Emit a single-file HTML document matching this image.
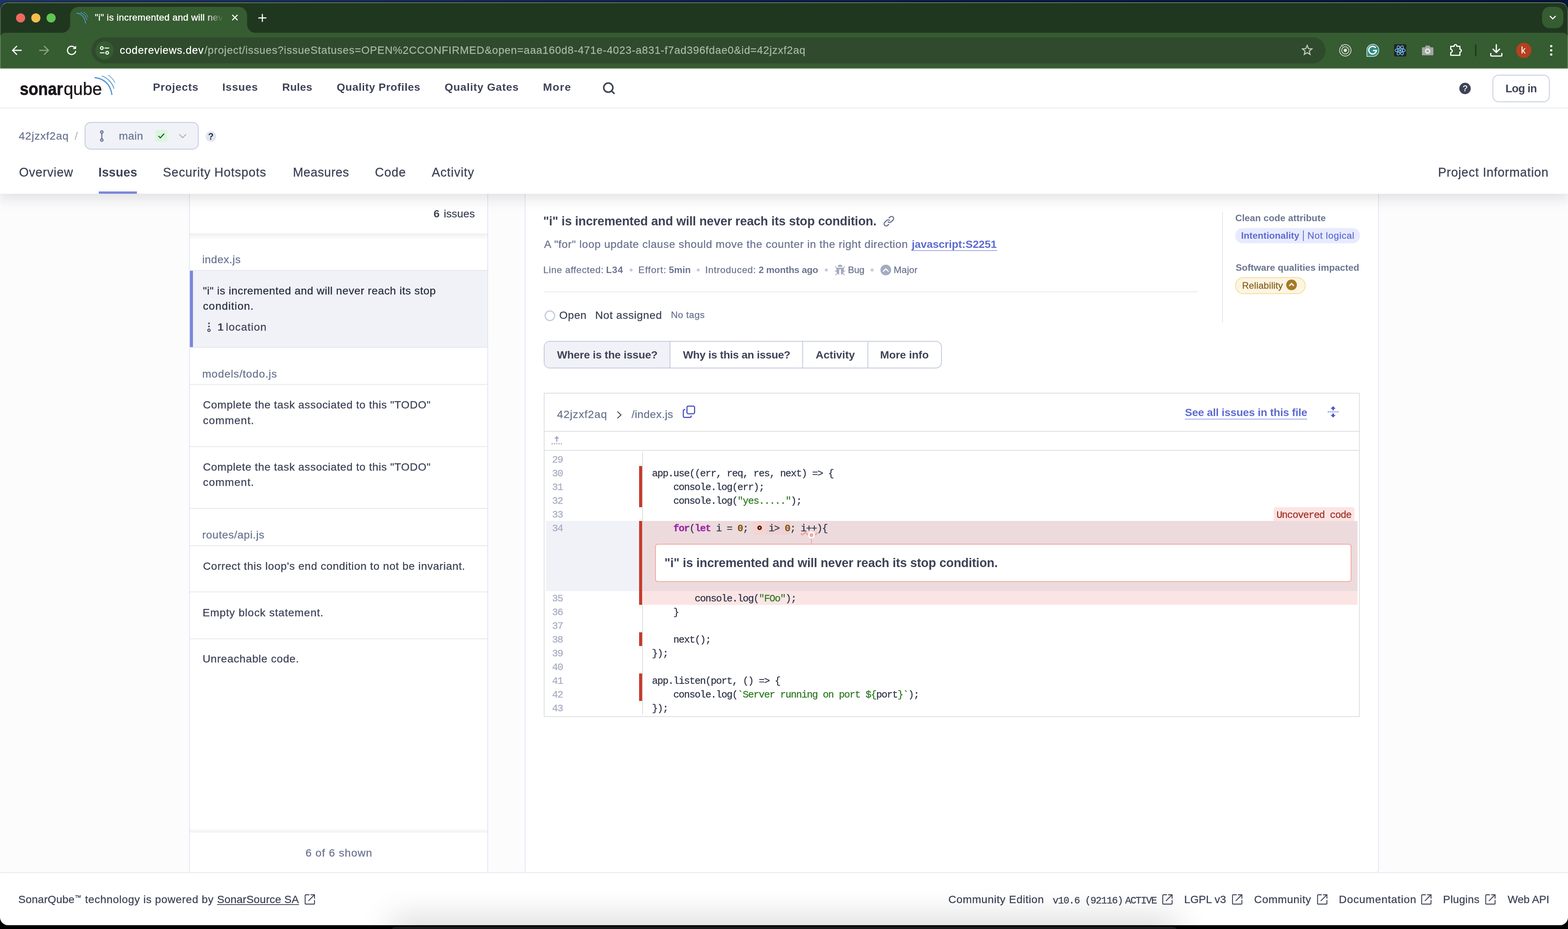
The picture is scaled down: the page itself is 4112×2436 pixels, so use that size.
<!DOCTYPE html>
<html lang="en"><head><meta charset="utf-8"><title>"i" is incremented and will never reach its stop condition.</title>
<style>
html,body{margin:0;padding:0;background:#000;}
html{width:4112px;height:2436px;overflow:hidden;}
body{width:4112px;height:2436px;overflow:hidden;position:relative;font-family:"Liberation Sans",sans-serif;}
#desk{position:absolute;left:0;top:0;width:4112px;height:40px;background:linear-gradient(90deg,#1d3564,#0a2048 50%,#02153a);}
#frame{position:absolute;left:0;top:6px;width:4112px;height:2420px;border-radius:21px;box-sizing:border-box;border:2px solid rgba(255,255,255,0.0);border-top-color:rgba(255,255,255,0.38);border-left-color:rgba(255,255,255,0.22);border-right-color:rgba(255,255,255,0.22);pointer-events:none;}
#outl{position:absolute;left:0;top:5px;width:4112px;height:2422px;border-radius:22px;background:#000;}
#win{will-change:transform;position:absolute;left:0;top:0;width:4112px;height:2436px;overflow:hidden;clip-path:inset(6px 0px 10px 0px round 21px);}
.ab{position:absolute;display:block;}
.t{position:absolute;white-space:pre;line-height:1;font-family:"Liberation Sans",sans-serif;color:#3e4357;}
.m{font-family:"Liberation Mono",monospace;}
#dock{position:absolute;left:1026px;top:2429px;width:2061px;height:30px;border-radius:14px;background:#19191b;box-shadow:0 0 90px 4px rgba(0,0,0,0.3);}
</style></head><body>
<div id="desk"></div><div id="outl"></div>
<div id="win">
<!-- page -->
<div class="ab" style="left:0;top:179px;width:4112px;height:2257px;background:#fcfcfd"></div>
<div class="ab" style="left:496px;top:508px;width:784px;height:1780px;background:#fff;border-left:2px solid #e1e6f3;border-right:2px solid #e1e6f3;box-sizing:border-box"></div>
<div class="ab" style="left:498px;top:708px;width:780px;height:204px;background:#f0f2f8;border-top:2px solid #e5e7ee;border-bottom:2px solid #e5e7ee;box-sizing:border-box"></div>
<div class="ab" style="left:498px;top:710px;width:8px;height:200px;background:#7b87d9"></div>
<div class="ab" style="left:498px;top:1007px;width:780px;height:2px;background:#e4e7ef"></div>
<div class="ab" style="left:498px;top:1170px;width:780px;height:2px;background:#e4e7ef"></div>
<div class="ab" style="left:498px;top:1332px;width:780px;height:2px;background:#e4e7ef"></div>
<div class="ab" style="left:498px;top:1430px;width:780px;height:2px;background:#e4e7ef"></div>
<div class="ab" style="left:498px;top:1551px;width:780px;height:2px;background:#e4e7ef"></div>
<div class="ab" style="left:498px;top:1674px;width:780px;height:2px;background:#e4e7ef"></div>
<div class="ab" style="left:498px;top:508px;width:780px;height:1780px;overflow:hidden;pointer-events:none"><div class="ab" style="left:-20px;top:0;width:820px;height:104px;background:#fff;box-shadow:0 6px 14px rgba(29,33,47,0.09)"></div><div class="ab" style="left:-20px;top:1675px;width:820px;height:125px;background:#fff;box-shadow:0 -5px 10px rgba(29,33,47,0.07)"></div></div>
<svg class="ab" style="left:541px;top:844px" width="14" height="28" viewBox="0 0 14 28"><circle cx="7" cy="4" r="2.3" fill="#3e4357"/><circle cx="7" cy="12" r="2.3" fill="#3e4357"/><circle cx="7" cy="22" r="3.2" fill="none" stroke="#3e4357" stroke-width="2.4"/></svg>
<span class="t" style="left:1137.0px;top:545.9px;font-size:28.5px;font-weight:700;">6</span>
<span class="t" style="left:1163.7px;top:545.9px;font-size:28.5px;letter-spacing:0.15px;-webkit-text-stroke:0.4px #3e4357;">issues</span>
<span class="t" style="left:530.2px;top:665.9px;font-size:28.5px;color:#6a7590;letter-spacing:0.60px;-webkit-text-stroke:0.4px #6a7590;">index.js</span>
<span class="t" style="left:532.2px;top:747.9px;font-size:28.5px;color:#2a2f40;letter-spacing:0.66px;-webkit-text-stroke:0.4px #2a2f40;">"i" is incremented and will never reach its stop</span>
<span class="t" style="left:532.2px;top:787.9px;font-size:28.5px;color:#2a2f40;letter-spacing:1.17px;-webkit-text-stroke:0.4px #2a2f40;">condition.</span>
<span class="t" style="left:570.5px;top:843.4px;font-size:28.5px;font-weight:700;">1</span>
<span class="t" style="left:592.2px;top:843.4px;font-size:28.5px;letter-spacing:1.17px;-webkit-text-stroke:0.4px #3e4357;">location</span>
<span class="t" style="left:530.2px;top:965.9px;font-size:28.5px;color:#6a7590;letter-spacing:0.93px;-webkit-text-stroke:0.4px #6a7590;">models/todo.js</span>
<span class="t" style="left:532.2px;top:1047.4px;font-size:28.5px;letter-spacing:0.69px;-webkit-text-stroke:0.4px #3e4357;">Complete the task associated to this "TODO"</span>
<span class="t" style="left:532.2px;top:1087.9px;font-size:28.5px;letter-spacing:1.20px;-webkit-text-stroke:0.4px #3e4357;">comment.</span>
<span class="t" style="left:532.2px;top:1209.9px;font-size:28.5px;letter-spacing:0.69px;-webkit-text-stroke:0.4px #3e4357;">Complete the task associated to this "TODO"</span>
<span class="t" style="left:532.2px;top:1249.9px;font-size:28.5px;letter-spacing:1.20px;-webkit-text-stroke:0.4px #3e4357;">comment.</span>
<span class="t" style="left:530.2px;top:1388.4px;font-size:28.5px;color:#6a7590;letter-spacing:0.77px;-webkit-text-stroke:0.4px #6a7590;">routes/api.js</span>
<span class="t" style="left:532.2px;top:1469.9px;font-size:28.5px;letter-spacing:0.76px;-webkit-text-stroke:0.4px #3e4357;">Correct this loop's end condition to not be invariant.</span>
<span class="t" style="left:531.2px;top:1591.9px;font-size:28.5px;letter-spacing:0.97px;-webkit-text-stroke:0.4px #3e4357;">Empty block statement.</span>
<span class="t" style="left:531.2px;top:1713.4px;font-size:28.5px;letter-spacing:0.83px;-webkit-text-stroke:0.4px #3e4357;">Unreachable code.</span>
<span class="t" style="left:801.2px;top:2221.9px;font-size:28.5px;color:#6a7590;letter-spacing:1.17px;-webkit-text-stroke:0.4px #6a7590;">6 of 6 shown</span>
<!-- main -->
<div class="ab" style="left:1376px;top:508px;width:2240px;height:1781px;background:#fff;border:2px solid #e1e6f3;border-top:none;border-radius:0 0 8px 8px;box-sizing:border-box"></div>
<svg class="ab" style="left:2315px;top:564px" width="32" height="32" viewBox="0 0 16 16" fill="#6a7590"><path d="m7.775 3.275 1.25-1.25a3.5 3.5 0 1 1 4.95 4.95l-2.5 2.5a3.5 3.5 0 0 1-4.95 0 .751.751 0 0 1 .018-1.042.751.751 0 0 1 1.042-.018 1.998 1.998 0 0 0 2.83 0l2.5-2.5a2.002 2.002 0 0 0-2.830-2.830l-1.25 1.25a.751.751 0 0 1-1.042-.018.751.751 0 0 1-.018-1.042Zm-4.690 9.640a1.998 1.998 0 0 0 2.830 0l1.25-1.25a.751.751 0 0 1 1.042.018.751.751 0 0 1 .018 1.042l-1.25 1.25a3.5 3.5 0 1 1-4.95-4.95l2.5-2.5a3.5 3.5 0 0 1 4.95 0 .751.751 0 0 1-.018 1.042.751.751 0 0 1-1.042.018 1.998 1.998 0 0 0-2.830 0l-2.5 2.5a1.998 1.998 0 0 0 0 2.830Z"/></svg>
<div class="ab" style="left:2390px;top:656px;width:225px;height:2px;background:#9aa4e8"></div>
<div class="ab" style="left:1650.6px;top:704px;width:8px;height:8px;border-radius:50%;background:#c5cddf"></div>
<div class="ab" style="left:1826.6px;top:704px;width:8px;height:8px;border-radius:50%;background:#c5cddf"></div>
<div class="ab" style="left:2162.5px;top:704px;width:8px;height:8px;border-radius:50%;background:#c5cddf"></div>
<div class="ab" style="left:2283.2px;top:704px;width:8px;height:8px;border-radius:50%;background:#c5cddf"></div>
<svg class="ab" style="left:2189px;top:694px" width="28" height="28" viewBox="0 0 28 28"><g fill="#a5abc0"><path d="M8 5.8 A6.05 6.05 0 0 1 20.1 5.8 Z"/><path d="M4.2 8 H23.9 V17 Q23 22.5 19.5 25 L16.3 26 V14 A2.2 2.2 0 0 0 11.8 14 V26 L8.5 25 Q5 22.500 4.2 17 Z"/></g><g stroke="#a5abc0" stroke-width="1.9" stroke-linecap="round" fill="none"><path d="M1.6 5.300 L5 8.200"/><path d="M26.5 5.300 L23 8.200"/><path d="M0.8 16.9 H4.5"/><path d="M27.2 16.9 H23.500"/><path d="M2.600 27 L6.900 23"/><path d="M25.500 27 L21.1 23"/></g></svg>
<svg class="ab" style="left:2309px;top:694px" width="28" height="28" viewBox="0 0 28 28"><circle cx="14" cy="14" r="14" fill="#a5abc0"/><path d="M7.600 17.3 L14 11 L20.4 17.3" fill="none" stroke="#fff" stroke-width="3" stroke-linecap="round" stroke-linejoin="round"/></svg>
<div class="ab" style="left:1426px;top:764px;width:1715px;height:2px;background:#e9e9eb"></div>
<div class="ab" style="left:1428px;top:814px;width:28px;height:28px;border-radius:50%;border:3.2px solid #c3cadf;box-sizing:border-box;background:#fff"></div>
<div class="ab" style="left:1426px;top:894px;width:1044px;height:72px;border-radius:16px;border:2px solid #bfc6dc;background:#fff;box-sizing:border-box;overflow:hidden"><div style="position:absolute;left:0;top:0;width:329px;height:68px;background:#f0f2f8"></div></div>
<div class="ab" style="left:1756px;top:895px;width:2px;height:70px;background:#bfc6dc"></div>
<div class="ab" style="left:2104px;top:895px;width:2px;height:70px;background:#bfc6dc"></div>
<div class="ab" style="left:2275px;top:895px;width:2px;height:70px;background:#bfc6dc"></div>
<div class="ab" style="left:3205px;top:556px;width:2px;height:290px;background:#e1e6f3"></div>
<div class="ab" style="left:3238.6px;top:598px;width:328.3px;height:40px;border-radius:20px;background:#e8ebff"></div>
<div class="ab" style="left:3417.4px;top:604px;width:2px;height:28px;background:#5d6cd0"></div>
<div class="ab" style="left:3238.6px;top:727px;width:185.3px;height:44px;border-radius:22px;background:#fcf5e4;border:2px solid #f6dc8c;box-sizing:border-box"></div>
<svg class="ab" style="left:3372.6px;top:732.5px" width="28" height="28" viewBox="0 0 28 28"><circle cx="14" cy="14" r="14" fill="#a87a26"/><path d="M8 16.500 L14 10.5 L20 16.500" fill="none" stroke="#fff" stroke-width="3.2"/></svg>
<span class="t" style="left:1424.6px;top:563.5px;font-size:32.5px;font-weight:700;letter-spacing:-0.22px;">"i" is incremented and will never reach its stop condition.</span>
<span class="t" style="left:1426.7px;top:625.9px;font-size:28.5px;color:#6a7590;letter-spacing:0.71px;-webkit-text-stroke:0.4px #6a7590;">A "for" loop update clause should move the counter in the right direction</span>
<span class="t" style="left:2391.0px;top:625.9px;font-size:28.5px;font-weight:700;color:#5d6cd0;letter-spacing:-0.14px;">javascript:S2251</span>
<span class="t" style="left:1424.8px;top:695.8px;font-size:24.5px;color:#6a7590;letter-spacing:0.85px;-webkit-text-stroke:0.4px #6a7590;">Line affected:</span>
<span class="t" style="left:1589.3px;top:695.8px;font-size:24.5px;font-weight:700;color:#6a7590;letter-spacing:1.00px;">L34</span>
<span class="t" style="left:1674.0px;top:695.8px;font-size:24.5px;color:#6a7590;letter-spacing:1.30px;-webkit-text-stroke:0.4px #6a7590;">Effort:</span>
<span class="t" style="left:1754.1px;top:695.8px;font-size:24.5px;font-weight:700;color:#6a7590;letter-spacing:0.08px;">5min</span>
<span class="t" style="left:1849.5px;top:695.8px;font-size:24.5px;color:#6a7590;letter-spacing:0.99px;-webkit-text-stroke:0.4px #6a7590;">Introduced:</span>
<span class="t" style="left:1989.4px;top:695.8px;font-size:24.5px;font-weight:700;color:#6a7590;letter-spacing:-0.26px;">2 months ago</span>
<span class="t" style="left:2223.7px;top:695.8px;font-size:24.5px;color:#6a7590;letter-spacing:-0.14px;-webkit-text-stroke:0.4px #6a7590;">Bug</span>
<span class="t" style="left:2343.8px;top:695.8px;font-size:24.5px;color:#6a7590;letter-spacing:0.28px;-webkit-text-stroke:0.4px #6a7590;">Major</span>
<span class="t" style="left:1466.5px;top:811.6px;font-size:28.5px;letter-spacing:0.58px;-webkit-text-stroke:0.4px #3e4357;">Open</span>
<span class="t" style="left:1560.7px;top:811.6px;font-size:28.5px;letter-spacing:0.78px;-webkit-text-stroke:0.4px #3e4357;">Not assigned</span>
<span class="t" style="left:1759.5px;top:813.6px;font-size:24.5px;color:#6a7590;letter-spacing:0.65px;-webkit-text-stroke:0.4px #6a7590;">No tags</span>
<span class="t" style="left:1460.7px;top:915.9px;font-size:28.5px;font-weight:700;letter-spacing:-0.20px;">Where is the issue?</span>
<span class="t" style="left:1791.0px;top:915.9px;font-size:28.5px;font-weight:700;letter-spacing:-0.39px;">Why is this an issue?</span>
<span class="t" style="left:2139.1px;top:915.9px;font-size:28.5px;font-weight:700;letter-spacing:-0.04px;">Activity</span>
<span class="t" style="left:2308.0px;top:915.9px;font-size:28.5px;font-weight:700;letter-spacing:-0.07px;">More info</span>
<span class="t" style="left:3239.4px;top:560.3px;font-size:24.5px;font-weight:700;color:#6a7590;letter-spacing:0.10px;">Clean code attribute</span>
<span class="t" style="left:3254.7px;top:606.3px;font-size:24.5px;font-weight:700;color:#5d6cd0;letter-spacing:0.02px;">Intentionality</span>
<span class="t" style="left:3428.8px;top:606.3px;font-size:24.5px;color:#5d6cd0;letter-spacing:0.83px;-webkit-text-stroke:0.4px #5d6cd0;">Not logical</span>
<span class="t" style="left:3240.4px;top:690.3px;font-size:24.5px;font-weight:700;color:#6a7590;">Software qualities impacted</span>
<span class="t" style="left:3257.2px;top:737.3px;font-size:24.5px;color:#86601f;letter-spacing:0.22px;-webkit-text-stroke:0.4px #86601f;">Reliability</span>
<!-- code -->
<div class="ab" style="left:1426px;top:1030px;width:2140px;height:850px;border:2px solid #dddddd;box-sizing:border-box;background:#fff"></div>
<div class="ab" style="left:1428px;top:1130px;width:2137px;height:2px;background:#dddddd"></div>
<div class="ab" style="left:1428px;top:1180px;width:2137px;height:2px;background:#dddddd"></div>
<svg class="ab" style="left:1615px;top:1075px" width="18" height="26" viewBox="0 0 18 26" fill="none" stroke="#3e4357" stroke-width="2.4"><path d="M4 4 L13.5 13 L4 22"/></svg>
<svg class="ab" style="left:1789px;top:1062px" width="36" height="36" viewBox="0 0 36 36" fill="none" stroke="#4b56bb" stroke-width="3"><rect x="12.5" y="3" width="20" height="20" rx="3.500"/><path d="M8 12 H6 A3 3 0 0 0 3 15 V29.5 A3 3 0 0 0 6 32.5 H20.5 A3 3 0 0 0 23.5 29.5 V27.5"/></svg>
<div class="ab" style="left:3107px;top:1098px;width:321px;height:2px;background:#9aa4e8"></div>
<svg class="ab" style="left:3481px;top:1064px" width="30" height="32" viewBox="0 0 30 32" fill="#4b56bb"><path d="M15 1 L21.5 8 H17 V12 H13 V8 H8.500 Z"/><path d="M15 31 L21.5 24 H17 V20 H13 V24 H8.500 Z"/><g><rect x="1" y="15" width="3" height="2"/><rect x="6" y="15" width="3" height="2"/><rect x="11" y="15" width="3" height="2"/><rect x="16" y="15" width="3" height="2"/><rect x="21" y="15" width="3" height="2"/><rect x="26" y="15" width="3" height="2"/></g></svg>
<svg class="ab" style="left:1446px;top:1142px" width="30" height="24" viewBox="0 0 30 24" fill="#a3a9c1"><path d="M14 1.2 L20.4 8 H15.6 V16 H12.4 V8 H7.6 Z"/><circle cx="2" cy="21.6" r="1.8"/><circle cx="8" cy="21.6" r="1.8"/><circle cx="14" cy="21.6" r="1.8"/><circle cx="20" cy="21.6" r="1.8"/><circle cx="26" cy="21.6" r="1.8"/></svg>
<div class="ab" style="left:1684px;top:1186px;width:2px;height:688px;background:#dddddd"></div>
<div class="ab" style="left:1432px;top:1366px;width:244px;height:184px;background:#f0f2f8"></div>
<div class="ab" style="left:1684px;top:1366px;width:1876px;height:184px;background:#eddadc"></div>
<div class="ab" style="left:1684px;top:1550px;width:1876px;height:36px;background:#fbe5e4"></div>
<div class="ab" style="left:2007px;top:1366px;width:65px;height:36px;background:#edd3d6"></div>
<div class="ab" style="left:1976px;top:1366px;width:32px;height:36px;border-radius:5px;background:#f6d3cf"></div>
<div class="ab" style="left:1986px;top:1378px;width:12px;height:12px;border-radius:50%;box-sizing:border-box;border:4.2px solid #521a12;background:#f3cfc9"></div>
<div class="ab" style="left:1676px;top:1222px;width:8px;height:108px;background:#c53b2c"></div>
<div class="ab" style="left:1676px;top:1658px;width:8px;height:36px;background:#c53b2c"></div>
<div class="ab" style="left:1676px;top:1766px;width:8px;height:72px;background:#c53b2c"></div>
<div class="ab" style="left:1676px;top:1366px;width:8px;height:220px;background:#c53b2c"></div>
<div class="ab" style="left:3340px;top:1330px;width:212px;height:36px;border-radius:6px 6px 0 0;background:#fce4e2"></div>
<span class="t m" style="left:3347.5px;top:1337.9px;font-size:26px;letter-spacing:-1.603px;color:#a0302a;-webkit-text-stroke:0.4px currentColor;">Uncovered code</span>
<div class="ab" style="left:1718px;top:1426px;width:1826px;height:100px;border:2px solid #f3a39b;border-radius:7px;box-sizing:border-box;background:#fff"></div>
<svg class="ab" style="left:2098px;top:1392px" width="48" height="36" viewBox="0 0 48 36" fill="none"><path d="M2.5 6.5 Q5.5 12 8.5 9 Q12 5.5 15 3.5 Q17.5 9 22 10.5 M39.5 10.5 Q43 9 44 4.5" stroke="#f3a9a2" stroke-width="4.4"/><path d="M30 16 V35" stroke="#f3a39b" stroke-width="2"/><circle cx="30" cy="11" r="7" fill="#f3a9a2" stroke="#fff" stroke-width="3.6"/></svg>
<span class="t m" style="left:1447.8px;top:1192.9px;font-size:26px;letter-spacing:-1.603px;color:#a6adc2;-webkit-text-stroke:0.4px currentColor;">29</span>
<span class="t m" style="left:1447.8px;top:1228.9px;font-size:26px;letter-spacing:-1.603px;color:#a6adc2;-webkit-text-stroke:0.4px currentColor;">30</span>
<span class="t m" style="left:1709.7px;top:1228.9px;font-size:26px;letter-spacing:-1.603px;color:#30354a;-webkit-text-stroke:0.4px currentColor;">app.use((err, req, res, next) =&gt; {</span>
<span class="t m" style="left:1447.8px;top:1264.9px;font-size:26px;letter-spacing:-1.603px;color:#a6adc2;-webkit-text-stroke:0.4px currentColor;">31</span>
<span class="t m" style="left:1709.7px;top:1264.9px;font-size:26px;letter-spacing:-1.603px;color:#30354a;-webkit-text-stroke:0.4px currentColor;">    console.log(err);</span>
<span class="t m" style="left:1447.8px;top:1300.9px;font-size:26px;letter-spacing:-1.603px;color:#a6adc2;-webkit-text-stroke:0.4px currentColor;">32</span>
<span class="t m" style="left:1709.7px;top:1300.9px;font-size:26px;letter-spacing:-1.603px;color:#30354a;-webkit-text-stroke:0.4px currentColor;">    console.log(<span style="color:#2f7a22">"yes....."</span>);</span>
<span class="t m" style="left:1447.8px;top:1336.9px;font-size:26px;letter-spacing:-1.603px;color:#a6adc2;-webkit-text-stroke:0.4px currentColor;">33</span>
<span class="t m" style="left:1447.8px;top:1372.9px;font-size:26px;letter-spacing:-1.603px;color:#a6adc2;-webkit-text-stroke:0.4px currentColor;">34</span>
<span class="t m" style="left:1447.8px;top:1556.9px;font-size:26px;letter-spacing:-1.603px;color:#a6adc2;-webkit-text-stroke:0.4px currentColor;">35</span>
<span class="t m" style="left:1709.7px;top:1556.9px;font-size:26px;letter-spacing:-1.603px;color:#30354a;-webkit-text-stroke:0.4px currentColor;">        console.log(<span style="color:#2f7a22">"FOo"</span>);</span>
<span class="t m" style="left:1447.8px;top:1592.9px;font-size:26px;letter-spacing:-1.603px;color:#a6adc2;-webkit-text-stroke:0.4px currentColor;">36</span>
<span class="t m" style="left:1709.7px;top:1592.9px;font-size:26px;letter-spacing:-1.603px;color:#30354a;-webkit-text-stroke:0.4px currentColor;">    }</span>
<span class="t m" style="left:1447.8px;top:1628.9px;font-size:26px;letter-spacing:-1.603px;color:#a6adc2;-webkit-text-stroke:0.4px currentColor;">37</span>
<span class="t m" style="left:1447.8px;top:1664.9px;font-size:26px;letter-spacing:-1.603px;color:#a6adc2;-webkit-text-stroke:0.4px currentColor;">38</span>
<span class="t m" style="left:1709.7px;top:1664.9px;font-size:26px;letter-spacing:-1.603px;color:#30354a;-webkit-text-stroke:0.4px currentColor;">    next();</span>
<span class="t m" style="left:1447.8px;top:1700.9px;font-size:26px;letter-spacing:-1.603px;color:#a6adc2;-webkit-text-stroke:0.4px currentColor;">39</span>
<span class="t m" style="left:1709.7px;top:1700.9px;font-size:26px;letter-spacing:-1.603px;color:#30354a;-webkit-text-stroke:0.4px currentColor;">});</span>
<span class="t m" style="left:1447.8px;top:1736.9px;font-size:26px;letter-spacing:-1.603px;color:#a6adc2;-webkit-text-stroke:0.4px currentColor;">40</span>
<span class="t m" style="left:1447.8px;top:1772.9px;font-size:26px;letter-spacing:-1.603px;color:#a6adc2;-webkit-text-stroke:0.4px currentColor;">41</span>
<span class="t m" style="left:1709.7px;top:1772.9px;font-size:26px;letter-spacing:-1.603px;color:#30354a;-webkit-text-stroke:0.4px currentColor;">app.listen(port, () =&gt; {</span>
<span class="t m" style="left:1447.8px;top:1808.9px;font-size:26px;letter-spacing:-1.603px;color:#a6adc2;-webkit-text-stroke:0.4px currentColor;">42</span>
<span class="t m" style="left:1709.7px;top:1808.9px;font-size:26px;letter-spacing:-1.603px;color:#30354a;-webkit-text-stroke:0.4px currentColor;">    console.log(<span style="color:#2f7a22">`Server running on port ${</span>port<span style="color:#2f7a22">}`</span>);</span>
<span class="t m" style="left:1447.8px;top:1844.9px;font-size:26px;letter-spacing:-1.603px;color:#a6adc2;-webkit-text-stroke:0.4px currentColor;">43</span>
<span class="t m" style="left:1709.7px;top:1844.9px;font-size:26px;letter-spacing:-1.603px;color:#30354a;-webkit-text-stroke:0.4px currentColor;">});</span>
<span class="t m" style="left:1709.7px;top:1372.9px;font-size:26px;letter-spacing:-1.603px;color:#30354a;-webkit-text-stroke:0.4px currentColor;">    <b style="color:#9b27a7">for</b>(<b style="color:#9b27a7">let</b> i = <b style="color:#80580f">0</b>;</span>
<span class="t m" style="left:2015.7px;top:1372.9px;font-size:26px;letter-spacing:-1.603px;color:#30354a;-webkit-text-stroke:0.4px currentColor;">i&gt; <b style="color:#80580f">0</b>; i++){</span>
<span class="t" style="left:1460.7px;top:1071.9px;font-size:28.5px;color:#6a7590;letter-spacing:1.12px;-webkit-text-stroke:0.4px #6a7590;">42jzxf2aq</span>
<span class="t" style="left:1656.2px;top:1071.9px;font-size:28.5px;color:#6a7590;letter-spacing:0.54px;-webkit-text-stroke:0.4px #6a7590;">/index.js</span>
<span class="t" style="left:3107.5px;top:1066.9px;font-size:28.5px;font-weight:700;color:#5d6cd0;letter-spacing:-0.27px;">See all issues in this file</span>
<span class="t" style="left:1742.6px;top:1460.0px;font-size:32.5px;font-weight:700;letter-spacing:-0.22px;">"i" is incremented and will never reach its stop condition.</span>
<!-- footer -->
<div class="ab" style="left:0;top:2288px;width:4112px;height:148px;background:#fff"></div>
<div class="ab" style="left:0;top:2287px;width:4112px;height:2px;background:#e6e8ee"></div>
<svg class="ab" style="left:798.5px;top:2344.5px" width="27" height="27" viewBox="0 0 27 27" fill="none" stroke="#3e4357" stroke-width="2.4"><path d="M12.5 1.2 H3.200 A2 2 0 0 0 1.2 3.200 V23.8 A2 2 0 0 0 3.200 25.8 H23.8 A2 2 0 0 0 25.8 23.8 V14.8"/><path d="M15.500 1.2 H25.8 V11.5"/><path d="M25.8 1.2 L9.500 17.5"/></svg>
<svg class="ab" style="left:3048.3px;top:2344.5px" width="27" height="27" viewBox="0 0 27 27" fill="none" stroke="#3e4357" stroke-width="2.4"><path d="M12.5 1.2 H3.200 A2 2 0 0 0 1.2 3.200 V23.8 A2 2 0 0 0 3.200 25.8 H23.8 A2 2 0 0 0 25.8 23.8 V14.8"/><path d="M15.500 1.2 H25.8 V11.5"/><path d="M25.8 1.2 L9.500 17.5"/></svg>
<svg class="ab" style="left:3230.5px;top:2344.5px" width="27" height="27" viewBox="0 0 27 27" fill="none" stroke="#3e4357" stroke-width="2.4"><path d="M12.5 1.2 H3.200 A2 2 0 0 0 1.2 3.200 V23.8 A2 2 0 0 0 3.200 25.8 H23.8 A2 2 0 0 0 25.8 23.8 V14.8"/><path d="M15.500 1.2 H25.8 V11.5"/><path d="M25.8 1.2 L9.500 17.5"/></svg>
<svg class="ab" style="left:3453.7px;top:2344.5px" width="27" height="27" viewBox="0 0 27 27" fill="none" stroke="#3e4357" stroke-width="2.4"><path d="M12.5 1.2 H3.200 A2 2 0 0 0 1.2 3.200 V23.8 A2 2 0 0 0 3.200 25.8 H23.8 A2 2 0 0 0 25.8 23.8 V14.8"/><path d="M15.500 1.2 H25.8 V11.5"/><path d="M25.8 1.2 L9.500 17.5"/></svg>
<svg class="ab" style="left:3727.0px;top:2344.5px" width="27" height="27" viewBox="0 0 27 27" fill="none" stroke="#3e4357" stroke-width="2.4"><path d="M12.5 1.2 H3.200 A2 2 0 0 0 1.2 3.200 V23.8 A2 2 0 0 0 3.200 25.8 H23.8 A2 2 0 0 0 25.8 23.8 V14.8"/><path d="M15.500 1.2 H25.8 V11.5"/><path d="M25.8 1.2 L9.500 17.5"/></svg>
<svg class="ab" style="left:3894.5px;top:2344.5px" width="27" height="27" viewBox="0 0 27 27" fill="none" stroke="#3e4357" stroke-width="2.4"><path d="M12.5 1.2 H3.200 A2 2 0 0 0 1.2 3.200 V23.8 A2 2 0 0 0 3.200 25.8 H23.8 A2 2 0 0 0 25.8 23.8 V14.8"/><path d="M15.500 1.2 H25.8 V11.5"/><path d="M25.8 1.2 L9.500 17.5"/></svg>
<span class="t" style="left:48.1px;top:2343.7px;font-size:28.5px;letter-spacing:0.19px;-webkit-text-stroke:0.4px #3e4357;">SonarQube</span>
<span class="t" style="left:196.0px;top:2344.6px;font-size:17px;-webkit-text-stroke:0.4px #3e4357;">™</span>
<span class="t" style="left:223.0px;top:2343.7px;font-size:28.5px;letter-spacing:0.66px;-webkit-text-stroke:0.4px #3e4357;">technology is powered by</span>
<span class="t" style="left:569.2px;top:2343.7px;font-size:28.5px;letter-spacing:0.18px;-webkit-text-stroke:0.4px #3e4357;text-decoration:underline;text-decoration-thickness:2px;text-underline-offset:3px;">SonarSource SA</span>
<span class="t" style="left:2486.9px;top:2343.7px;font-size:28.5px;letter-spacing:0.70px;-webkit-text-stroke:0.4px #3e4357;">Community Edition</span>
<span class="t m" style="left:2760.4px;top:2348.9px;font-size:26px;letter-spacing:-1.45px;-webkit-text-stroke:0.4px #3e4357;">v10.6 (92116)</span>
<span class="t m" style="left:2950.8px;top:2348.9px;font-size:26px;letter-spacing:-1.94px;-webkit-text-stroke:0.4px #3e4357;">ACTIVE</span>
<span class="t" style="left:3105.6px;top:2343.7px;font-size:28.5px;letter-spacing:-0.02px;-webkit-text-stroke:0.4px #3e4357;">LGPL v3</span>
<span class="t" style="left:3288.8px;top:2343.7px;font-size:28.5px;letter-spacing:0.64px;-webkit-text-stroke:0.4px #3e4357;">Community</span>
<span class="t" style="left:3511.0px;top:2343.7px;font-size:28.5px;letter-spacing:0.93px;-webkit-text-stroke:0.4px #3e4357;">Documentation</span>
<span class="t" style="left:3784.3px;top:2343.7px;font-size:28.5px;letter-spacing:0.32px;-webkit-text-stroke:0.4px #3e4357;">Plugins</span>
<span class="t" style="left:3953.8px;top:2343.7px;font-size:28.5px;letter-spacing:-0.21px;-webkit-text-stroke:0.4px #3e4357;">Web API</span>
<!-- header -->
<div class="ab" style="left:0;top:283px;width:4112px;height:225px;background:#fff;box-shadow:0 6px 36px 6px rgba(29,33,47,0.13)"></div>
<div class="ab" style="left:0;top:180px;width:4112px;height:103px;background:#fff"></div>
<div class="ab" style="left:0;top:282px;width:4112px;height:2px;background:#e8e9ec"></div>
<svg class="ab" style="left:245px;top:193px" width="62" height="60" viewBox="0 0 62 60" fill="none" stroke="#5a9bd0" stroke-linecap="butt"><path d="M3 10.5 C26 12 45.5 28 48.5 56" stroke-width="3.3"/><path d="M22 6 C37 11 49 23.5 54 39.5" stroke-width="2.3"/><path d="M38.5 4 C47 9 53 16.5 56.5 24.5" stroke-width="1.6"/></svg>
<svg class="ab" style="left:1580px;top:214px" width="36" height="36" viewBox="0 0 36 36" fill="none" stroke="#3e4357" stroke-width="4"><circle cx="15.2" cy="15.8" r="12"/><path d="M23.5 24.2 L31.5 32.2"/></svg>
<div class="ab" style="left:3827px;top:217px;width:30px;height:30px;border-radius:50%;background:#3e4357"></div>
<div class="ab" style="left:3914px;top:196px;width:150px;height:72px;border-radius:16px;border:2px solid #c3cadf;background:#fff;box-sizing:border-box"></div>
<div class="ab" style="left:222px;top:320px;width:299px;height:72px;border-radius:16px;border:2px solid #bfc6dc;background:#f0f2f8;box-sizing:border-box"></div>
<svg class="ab" style="left:259px;top:341px" width="16" height="32" viewBox="0 0 16 32" fill="none" stroke="#6a7590" stroke-width="3"><circle cx="8" cy="5.2" r="3.2"/><circle cx="8" cy="26.3" r="3.2"/><path d="M8 8.5 V23"/></svg>
<div class="ab" style="left:407px;top:340px;width:32px;height:32px;border-radius:4px;background:#dcf6dd"></div>
<svg class="ab" style="left:413px;top:347px" width="20" height="18" viewBox="0 0 20 18" fill="none" stroke="#1f6234" stroke-width="2.8"><path d="M2.5 9.5 L7.5 14.500 L17.5 3.500"/></svg>
<svg class="ab" style="left:468px;top:349px" width="22" height="16" viewBox="0 0 22 16" fill="none" stroke="#a6adc2" stroke-width="2.4"><path d="M2 3 L11 12 L20 3"/></svg>
<div class="ab" style="left:539px;top:344px;width:28px;height:28px;border-radius:50%;background:#e1e6f3"></div>
<div class="ab" style="left:259px;top:502px;width:100px;height:6px;background:#7b87d9"></div>
<span class="t" style="left:52.3px;top:210.1px;font-size:46px;font-weight:700;color:#1b171b;transform:scaleX(0.9006);transform-origin:0 0;-webkit-text-stroke:1px #1b171b;">sonar</span>
<span class="t" style="left:166.8px;top:210.1px;font-size:46px;color:#1b171b;transform:scaleX(0.9815);transform-origin:0 0;-webkit-text-stroke:0.6px #1b171b;">qube</span>
<span class="t" style="left:401.0px;top:213.9px;font-size:28.5px;font-weight:700;letter-spacing:0.91px;">Projects</span>
<span class="t" style="left:583.0px;top:213.9px;font-size:28.5px;font-weight:700;letter-spacing:0.82px;">Issues</span>
<span class="t" style="left:740.0px;top:213.9px;font-size:28.5px;font-weight:700;letter-spacing:0.31px;">Rules</span>
<span class="t" style="left:883.0px;top:213.9px;font-size:28.5px;font-weight:700;letter-spacing:0.65px;">Quality Profiles</span>
<span class="t" style="left:1166.0px;top:213.9px;font-size:28.5px;font-weight:700;letter-spacing:0.84px;">Quality Gates</span>
<span class="t" style="left:1424.0px;top:213.9px;font-size:28.5px;font-weight:700;letter-spacing:1.59px;">More</span>
<span class="t" style="left:3836.0px;top:221.4px;font-size:22px;color:#ffffff;-webkit-text-stroke:0.4px #ffffff;">?</span>
<span class="t" style="left:3948.0px;top:217.5px;font-size:29px;font-weight:700;letter-spacing:-0.85px;">Log in</span>
<span class="t" style="left:49.2px;top:342.4px;font-size:28.5px;color:#6a7590;letter-spacing:1.06px;-webkit-text-stroke:0.4px #6a7590;">42jzxf2aq</span>
<span class="t" style="left:196.0px;top:342.4px;font-size:28.5px;color:#b9b9b9;-webkit-text-stroke:0.4px #b9b9b9;">/</span>
<span class="t" style="left:311.7px;top:342.4px;font-size:28.5px;color:#6a7590;letter-spacing:0.56px;-webkit-text-stroke:0.4px #6a7590;">main</span>
<span class="t" style="left:545.8px;top:347.1px;font-size:23.5px;font-weight:700;color:#2a2f40;">?</span>
<span class="t" style="left:49.9px;top:436.2px;font-size:32.5px;letter-spacing:0.85px;-webkit-text-stroke:0.4px #3e4357;">Overview</span>
<span class="t" style="left:258.0px;top:436.2px;font-size:32.5px;font-weight:700;letter-spacing:0.12px;">Issues</span>
<span class="t" style="left:427.2px;top:436.2px;font-size:32.5px;letter-spacing:0.97px;-webkit-text-stroke:0.4px #3e4357;">Security Hotspots</span>
<span class="t" style="left:768.2px;top:436.2px;font-size:32.5px;letter-spacing:0.59px;-webkit-text-stroke:0.4px #3e4357;">Measures</span>
<span class="t" style="left:983.2px;top:436.2px;font-size:32.5px;letter-spacing:0.99px;-webkit-text-stroke:0.4px #3e4357;">Code</span>
<span class="t" style="left:1132.2px;top:436.2px;font-size:32.5px;letter-spacing:1.13px;-webkit-text-stroke:0.4px #3e4357;">Activity</span>
<span class="t" style="left:3771.2px;top:436.2px;font-size:32.5px;letter-spacing:0.91px;-webkit-text-stroke:0.4px #3e4357;">Project Information</span>
<!-- chrome -->
<div class="ab" style="left:0;top:0;width:4112px;height:120px;background:#20371f"></div>
<div class="ab" style="left:0px;top:86px;width:4112px;height:94px;background:#365c31;border-radius:14px 14px 0 0"></div>
<div class="ab" style="left:0;top:178px;width:4112px;height:2px;background:#5d7f58"></div>
<div class="ab" style="left:184px;top:18px;width:464px;height:70px;background:#365c31;border-radius:22px 22px 0 0"></div>
<div class="ab" style="left:162px;top:64px;width:22px;height:22px;background:radial-gradient(circle at 0 0,rgba(54,92,49,0) 21.5px,#365c31 22.5px)"></div>
<div class="ab" style="left:648px;top:64px;width:22px;height:22px;background:radial-gradient(circle at 100% 0,rgba(54,92,49,0) 21.5px,#365c31 22.5px)"></div>
<div class="ab" style="left:42px;top:34.5px;width:24px;height:24px;border-radius:50%;background:#ec6a5f"></div>
<div class="ab" style="left:82px;top:34.5px;width:24px;height:24px;border-radius:50%;background:#f5bf4f"></div>
<div class="ab" style="left:122px;top:34.5px;width:24px;height:24px;border-radius:50%;background:#61c554"></div>
<svg class="ab" style="left:199px;top:30px" width="34" height="34" viewBox="0 0 34 34" fill="none" stroke="#5a9fd4" stroke-linecap="round"><path d="M2.5 4.5 C14 5.5 23.5 15 25.5 31" stroke-width="1.900"/><path d="M12 2.5 C20 6 26.5 13.5 29 22" stroke-width="1.500"/><path d="M20.5 1.5 C25.5 5 29.5 10 31.5 15" stroke-width="1.200"/></svg>
<svg class="ab" style="left:606px;top:36px" width="20" height="20" viewBox="0 0 20 20" fill="none" stroke="#fff" stroke-width="2.6"><path d="M3 3 L17 17 M17 3 L3 17"/></svg>
<svg class="ab" style="left:676px;top:35px" width="24" height="24" viewBox="0 0 24 24" fill="none" stroke="#fff" stroke-width="2.8"><path d="M12 1.5 V22.5 M1.5 12 H22.5"/></svg>
<div class="ab" style="left:4044px;top:18px;width:56px;height:56px;border-radius:20px;background:#365c31"></div>
<svg class="ab" style="left:4061px;top:37px" width="22" height="18" viewBox="0 0 22 18" fill="none" stroke="#fff" stroke-width="3"><path d="M3.5 5 L11 12.5 L18.5 5"/></svg>
<svg class="ab" style="left:28px;top:116px" width="32" height="32" viewBox="0 0 32 32" fill="none" stroke="#fff" stroke-width="3" stroke-linejoin="miter"><path d="M29 16 H6 M16.5 4.5 L5 16 L16.5 27.5"/></svg>
<svg class="ab" style="left:100px;top:116px" width="32" height="32" viewBox="0 0 32 32" fill="none" stroke="#8aa585" stroke-width="3"><path d="M3 16 H26 M15.5 4.5 L27 16 L15.5 27.5"/></svg>
<svg class="ab" style="left:172px;top:116px" width="32" height="32" viewBox="0 0 32 32" fill="none" stroke="#fff" stroke-width="3"><path d="M26.5 17.5 A10.8 10.8 0 1 1 23.500 8.500"/><path d="M27.5 3.500 V12.5 H18.5 Z" fill="#fff" stroke="none"/></svg>
<div class="ab" style="left:240px;top:98px;width:3236px;height:68px;border-radius:34px;background:#2f4a2c"></div>
<div class="ab" style="left:250px;top:108px;width:48px;height:48px;border-radius:50%;background:#365c31"></div>
<svg class="ab" style="left:260px;top:118px" width="28" height="28" viewBox="0 0 28 28" fill="none" stroke="#fff" stroke-width="2.6" stroke-linecap="round"><circle cx="7" cy="8" r="3.6"/><path d="M15 8 H25"/><circle cx="21" cy="20.5" r="3.6"/><path d="M3 20.5 H13"/></svg>
<svg class="ab" style="left:3413px;top:116px" width="30" height="30" viewBox="0 0 34 34" fill="none" stroke="#c3ccc1" stroke-width="3" stroke-linejoin="miter"><path d="M17 3.5 L20.9 13 L31 13.8 L23.3 20.4 L25.7 30.3 L17 25 L8.3 30.3 L10.7 20.4 L3 13.8 L13.1 13 Z"/></svg>
<svg class="ab" style="left:3511px;top:115px" width="34" height="34" viewBox="0 0 34 34" fill="none" stroke="#d9dfd7" stroke-width="2"><circle cx="17" cy="17" r="15"/><circle cx="17" cy="17" r="9.5"/><circle cx="17" cy="17" r="4.5" fill="#d9dfd7" stroke="none"/><circle cx="9" cy="4.5" r="3" fill="#9aa79a" stroke="none"/><circle cx="23.5" cy="11" r="2.6" fill="#9aa79a" stroke="none"/></svg>
<svg class="ab" style="left:3583px;top:115px" width="34" height="34" viewBox="0 0 34 34"><path d="M17 1 A16 16 0 1 1 17 33 H1.5 V17 A16 16 0 0 1 17 1 Z" fill="#2f8d80" stroke="#e8f1ee" stroke-width="1.6"/><path d="M24.5 10.5 A10 10 0 1 0 26.5 17.5 H17.5" fill="none" stroke="#fff" stroke-width="3.4"/></svg>
<svg class="ab" style="left:3656px;top:116px" width="32" height="32" viewBox="0 0 32 32"><rect width="32" height="32" rx="3" fill="#20232a"/><g fill="none" stroke="#6fc3ee" stroke-width="1.8"><ellipse cx="16" cy="16" rx="13.5" ry="5.2"/><ellipse cx="16" cy="16" rx="13.5" ry="5.2" transform="rotate(60 16 16)"/><ellipse cx="16" cy="16" rx="13.5" ry="5.2" transform="rotate(120 16 16)"/></g><circle cx="16" cy="16" r="2.8" fill="#6fc3ee"/></svg>
<svg class="ab" style="left:3728px;top:118px" width="32" height="28" viewBox="0 0 32 28"><path d="M3 6 H9 L11 1.5 H21 L23 6 H29 A2 2 0 0 1 31 8 V25 A2 2 0 0 1 29 27 H3 A2 2 0 0 1 1 25 V8 A2 2 0 0 1 3 6 Z" fill="#a3a8a3"/><circle cx="16" cy="16" r="7" fill="#ececec"/><circle cx="16" cy="16" r="3.6" fill="#a3a8a3"/></svg>
<svg class="ab" style="left:3800px;top:113px" width="36" height="36" viewBox="0 0 36 36" fill="none" stroke="#fff" stroke-width="3" stroke-linejoin="round"><path d="M4.5 8.5 H13.5 A3.6 3.6 0 1 1 20.5 8.5 H28.5 V16 A3.6 3.6 0 1 1 28.5 23.5 V32 H4.5 V24.5 A4 4 0 1 0 4.5 16.5 Z"/></svg>
<div class="ab" style="left:3868px;top:116px;width:4px;height:32px;border-radius:2px;background:#223c20"></div>
<svg class="ab" style="left:3907px;top:114px" width="34" height="36" viewBox="0 0 34 36" fill="none" stroke="#fff" stroke-width="3.2"><path d="M17 2 V23 M7.5 14 L17 23.5 L26.5 14" stroke-linejoin="miter"/><path d="M2.5 25 V30.5 A2.5 2.5 0 0 0 5 33 H29 A2.5 2.5 0 0 0 31.500 30.5 V25"/></svg>
<div class="ab" style="left:3976px;top:112px;width:40px;height:40px;border-radius:50%;background:#b5401f"></div>
<div class="ab" style="left:4064.8px;top:117.8px;width:6.4px;height:6.4px;border-radius:50%;background:#fff"></div>
<div class="ab" style="left:4064.8px;top:128.8px;width:6.4px;height:6.4px;border-radius:50%;background:#fff"></div>
<div class="ab" style="left:4064.8px;top:139.8px;width:6.4px;height:6.4px;border-radius:50%;background:#fff"></div>
<span class="t" style="left:248.8px;top:34.3px;font-size:24.5px;color:#ffffff;letter-spacing:0.40px;-webkit-text-stroke:0.5px #ffffff;width:337px;overflow:hidden;-webkit-mask-image:linear-gradient(90deg,#000 86%,transparent 100%);mask-image:linear-gradient(90deg,#000 86%,transparent 100%);">"i" is incremented and will nev</span>
<span class="t" style="left:314.1px;top:117.8px;font-size:28px;color:#ffffff;letter-spacing:0.80px;-webkit-text-stroke:0.3px #ffffff;">codereviews.dev</span>
<span class="t" style="left:536.1px;top:117.8px;font-size:28px;color:#aab9a7;letter-spacing:0.87px;-webkit-text-stroke:0.3px #aab9a7;">/project/issues?issueStatuses=OPEN%2CCONFIRMED&amp;open=aaa160d8-471e-4023-a831-f7ad396fdae0&amp;id=42jzxf2aq</span>
<span class="t" style="left:3989.0px;top:121.0px;font-size:23px;color:#ffffff;-webkit-text-stroke:0.4px #ffffff;">k</span>
<div id="frame"></div>
</div>
<div id="dockclip" style="position:absolute;left:0;top:0;width:4112px;height:2436px;overflow:hidden;pointer-events:none"><div id="dock"></div></div>
</body></html>
